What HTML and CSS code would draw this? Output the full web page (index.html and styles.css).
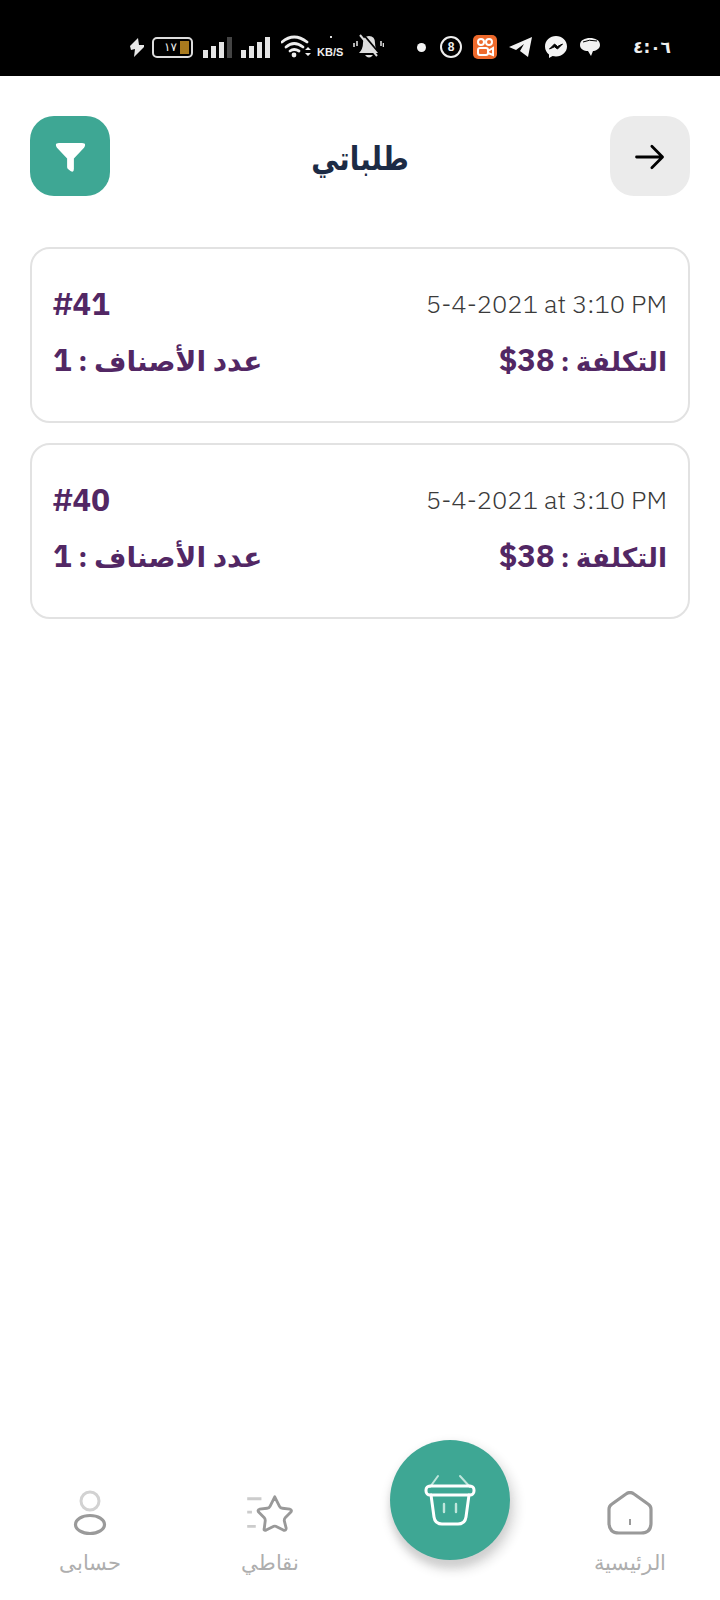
FILE: index.html
```html
<!DOCTYPE html>
<html lang="ar">
<head>
<meta charset="utf-8">
<title>طلباتي</title>
<link rel="stylesheet" href="styles.css">
</head>
<body>
<div class="page">
  <div class="status">
    <svg class="st-bolt" width="15" height="19" viewBox="0 0 15 19"><path d="M8 0 L0 8 L1 12 L5 11 L4 19 L14 9 L14 7 L9 7 Z" fill="#e8e8e8"/></svg>
    <div class="battery"><span class="bat-num">١٧</span><span class="bat-level"></span></div>
    <svg class="st-signal" width="30" height="22" viewBox="0 0 30 22"><rect x="0" y="14" width="5" height="8" fill="#e5e5e5"/><rect x="8" y="10" width="5" height="12" fill="#e5e5e5"/><rect x="16" y="6" width="5" height="16" fill="#e5e5e5"/><rect x="24" y="1" width="5" height="21" fill="#444"/></svg>
    <svg class="st-signal2" width="30" height="22" viewBox="0 0 30 22"><rect x="0" y="14" width="5" height="8" fill="#e5e5e5"/><rect x="8" y="10" width="5" height="12" fill="#e5e5e5"/><rect x="16" y="6" width="5" height="16" fill="#e5e5e5"/><rect x="24" y="1" width="5" height="21" fill="#e5e5e5"/></svg>
    <svg class="st-wifi" width="30" height="24" viewBox="0 0 30 24"><g fill="none" stroke="#eee" stroke-width="2.800" stroke-linecap="round"><path d="M1 7 Q13 -3 26 7"/><path d="M5 12 Q13 5 22 12"/><path d="M9 16 Q13 13 18 16"/></g><circle cx="13" cy="20" r="2.400" fill="#eee"/><path d="M24 15 L27 12 L30 15 Z M24 18 L30 18 L27 21 Z" fill="#eee"/></svg>
    <div class="kbs"><span class="kbs-dot"></span>KB/S</div>
    <svg class="st-bell" width="31" height="26" viewBox="0 0 31 26"><path d="M6 19 Q10 15 10 9 Q10 2 16 2 Q22 2 22 9 Q22 15 26 19 Z" fill="#ddd"/><path d="M12 21 Q16 26 20 21 Z" fill="#ddd"/><path d="M10 0 L27 20" stroke="#000" stroke-width="1.800"/><path d="M7 1 L24 22" stroke="#ddd" stroke-width="2"/><path d="M1 9 V13 M4 7 V12 M28 7 V12 M30.500 9 V13" stroke="#ddd" stroke-width="1.600"/></svg>
    <span class="st-dot"></span>
    <div class="ball">8</div>
    <svg class="st-kwai" width="24" height="24" viewBox="0 0 24 24"><rect width="24" height="24" rx="5" fill="#ee6a2c"/><g fill="none" stroke="#fff" stroke-width="2"><circle cx="8" cy="7" r="3"/><circle cx="16" cy="7" r="3"/><rect x="5" y="13" width="10" height="7" rx="2"/><path d="M15 16 L20 13 V20 L15 18"/></g></svg>
    <svg class="st-tg" width="23" height="20" viewBox="0 0 23 20"><path d="M0 10 L23 0 L19 20 L11 14 L15 7 L7 13 Z" fill="#f2f2f2"/></svg>
    <svg class="st-msg" width="22" height="22" viewBox="0 0 22 22"><path d="M11 0 C5 0 0 4.500 0 10.500 C0 14 1.600 16.600 4 18.400 V22 L7.600 20 C8.700 20.300 9.800 20.500 11 20.500 C17 20.500 22 16 22 10.500 C22 4.500 17 0 11 0 Z" fill="#f4f4f4"/><path d="M4.500 13 L9.500 8 L12.500 10.500 L17.500 8 L12.500 13 L9.500 10.800 Z" fill="#000" stroke="#000"/></svg>
    <svg class="st-bubble" width="20" height="20" viewBox="0 0 20 20"><path d="M10 1 C15 1 20 3 20 8 C20 12 15 14 13 14 L11 19 L8 14 C4 14 0 12 0 8 C0 3 5 1 10 1 Z" fill="#f2f2f2"/><path d="M3 5 Q9 2 17 4" fill="none" stroke="#000" stroke-width="1"/></svg>
    <div class="time">٤:٠٦</div>
  </div>

  <header class="header">
    <button class="icon-btn filter-btn" aria-label="filter">
      <svg width="33" height="29" viewBox="0 0 34 30"><path d="M3 5 Q0 0 5 0 H29 Q34 0 31 5 L20.500 16 V27 Q20.500 31 17 29 L15 27.500 Q13.500 26.500 13.500 25 V16 Z" fill="#fff"/></svg>
    </button>
    <h1 class="title">طلباتي</h1>
    <button class="icon-btn back-btn" aria-label="back">
      <svg width="30" height="26" viewBox="0 0 32 28"><path d="M1.500 14 H29 M18 2.500 L29.500 14 L18 25.500" fill="none" stroke="#000" stroke-width="3" stroke-linecap="round" stroke-linejoin="round"/></svg>
    </button>
  </header>

  <main class="orders">
    <article class="card">
      <div class="row">
        <span class="num">#41</span>
        <span class="date">5-4-2021 at 3:10 PM</span>
      </div>
      <div class="row">
        <span class="strong" dir="rtl">عدد الأصناف : <bdi class="lat">1</bdi></span>
        <span class="strong cost" dir="rtl">التكلفة : <bdi class="lat" dir="ltr">$38</bdi></span>
      </div>
    </article>
    <article class="card">
      <div class="row">
        <span class="num">#40</span>
        <span class="date">5-4-2021 at 3:10 PM</span>
      </div>
      <div class="row">
        <span class="strong" dir="rtl">عدد الأصناف : <bdi class="lat">1</bdi></span>
        <span class="strong cost" dir="rtl">التكلفة : <bdi class="lat" dir="ltr">$38</bdi></span>
      </div>
    </article>
  </main>

  <nav class="nav">
    <div class="nav-item">
      <div class="nav-icon">
        <svg width="34" height="46" viewBox="0 0 34 46"><circle cx="17" cy="11" r="9" fill="none" stroke="#d2d2d2" stroke-width="3"/><ellipse cx="17" cy="34.500" rx="14.500" ry="9" fill="none" stroke="#9a9a9a" stroke-width="3.200"/></svg>
      </div>
      <span class="nav-label" dir="rtl">حسابى</span>
    </div>
    <div class="nav-item">
      <div class="nav-icon">
        <svg width="46" height="38" viewBox="0 0 48 40"><path d="M29 3 L34 13 Q35 15 37 15 L45 16 Q47.500 17 46 19 L40 25 Q39 26 39 28 L41 36 Q41 39 38 38 L30 34 Q29 33.500 28 34 L20 38 Q17 39 18 36 L19 28 Q19 26 18 25 L12 19 Q10.500 17 13 16 L21 15 Q23 15 24 13 Z" fill="none" stroke="#999" stroke-width="3" stroke-linejoin="round"/><path d="M0 5 H15 M0 19 H5 M0 34 H9" stroke="#ccc" stroke-width="3"/></svg>
      </div>
      <span class="nav-label" dir="rtl">نقاطي</span>
    </div>
    <div class="nav-item item-fab">
      <div class="fab">
        <svg width="52" height="52" viewBox="0 0 52 52"><g fill="none" stroke="#fff" stroke-linecap="round" stroke-linejoin="round"><path d="M6 13 L14 2 M46 13 L36 2" stroke="#bfe6dc" stroke-width="2"/><rect x="2" y="12" width="48" height="9" rx="4" stroke-width="3"/><path d="M7 21 L10 43 Q11 50 18 50 H34 Q41 50 42 43 L45 21" stroke-width="3"/><path d="M20 30 V38 M32 30 V38" stroke="#bfe6dc" stroke-width="2.400"/></g></svg>
      </div>
    </div>
    <div class="nav-item">
      <div class="nav-icon">
        <svg width="46" height="44" viewBox="0 0 46 44"><path d="M2 18 Q2 15 5 13 L19 3 Q23 0 27 3 L41 13 Q44 15 44 18 V32 Q44 42 34 42 H12 Q2 42 2 32 Z" fill="none" stroke="#999" stroke-width="3.200" stroke-linejoin="round"/><path d="M23 28 V34" stroke="#999" stroke-width="2"/></svg>
      </div>
      <span class="nav-label" dir="rtl">الرئيسية</span>
    </div>
  </nav>
</div>
</body>
</html>
```

FILE: styles.css
```css
* { box-sizing: border-box; }
html, body { margin: 0; padding: 0; background: #fff; }
body { font-family: "IBM Plex Sans", "Noto Sans", "DejaVu Sans", sans-serif; }
.page { width: 720px; height: 1600px; display: flex; flex-direction: column; overflow: hidden; }

.status { height: 76px; flex: none; background: #000; display: flex; align-items: center; padding: 18px 0 0 130px; color: #eee; }
.status > * { flex: none; }
.battery { margin-left: 7px; width: 41px; height: 21px; border: 2px solid #ddd; border-radius: 5px; display: flex; align-items: center; justify-content: space-between; padding: 0 2px 0 10px; }
.bat-num { font: 12px "DejaVu Sans", sans-serif; color: #eee; line-height: 1; }
.bat-level { width: 9px; height: 13px; background: #a87a1e; }
.st-signal { margin-left: 10px; }
.st-signal2 { margin-left: 8px; }
.st-wifi { margin-left: 10px; }
.kbs { position: relative; width: 30px; margin-left: 6px; padding-top: 10px; font: bold 11px/12px "Liberation Sans", sans-serif; color: #eee; }
.kbs-dot { position: absolute; left: 13px; top: 0; width: 2px; height: 2px; background: #ddd; }
.st-bell { margin-left: 6px; }
.st-dot { width: 9px; height: 9px; border-radius: 50%; background: #f4f4f4; margin-left: 33px; }
.ball { margin-left: 14px; width: 22px; height: 22px; border: 2px solid #eee; border-radius: 50%; font: bold 12px/18px "Liberation Sans", sans-serif; text-align: center; color: #eee; }
.st-kwai { margin-left: 11px; }
.st-tg { margin-left: 12px; }
.st-msg { margin-left: 13px; }
.st-bubble { margin-left: 13px; }
.time { margin-left: 33px; font: bold 17px "DejaVu Sans", sans-serif; color: #eee; }

.header { flex: none; height: 120px; padding: 40px 30px 0; display: flex; justify-content: space-between; align-items: flex-start; }
.icon-btn { width: 80px; height: 80px; border: 0; border-radius: 24px; padding: 2px 0 0; display: flex; align-items: center; justify-content: center; }
.filter-btn { background: #3ea794; }
.back-btn { background: #ebebeb; }
.title { margin: 0; height: 80px; padding-top: 2px; font-size: 33px; font-weight: 700; line-height: 80px; color: #1c2b45; transform: scaleX(0.84); }

.orders { flex: 1; padding: 51px 30px 0; display: flex; flex-direction: column; gap: 20px; }
.card { height: 176px; border: 2px solid #e2e2e2; border-radius: 20px; padding: 37px 21px 0; display: flex; flex-direction: column; gap: 20px; }
.row { display: flex; justify-content: space-between; align-items: center; height: 36px; }
.num, .strong { font-size: 28px; font-weight: 700; color: #522764; line-height: 36px; }
.strong.cost { font-size: 26.500px; }
.num, .lat { font-size: 31px; }
.date { font-size: 25.500px; font-weight: 300; color: #3a3a3a; line-height: 36px; }

.nav { flex: none; height: 160px; position: relative; display: grid; grid-template-columns: 180px 180px 180px 180px; }
.nav-item { display: flex; flex-direction: column; align-items: center; padding-top: 50px; }
.nav-icon { height: 46px; display: flex; align-items: center; justify-content: center; }
.nav-label { margin-top: 10px; font-size: 21px; font-weight: 300; color: #aeaeae; line-height: 32px; }
.item-fab { padding-top: 0; }
.fab { width: 120px; height: 120px; border-radius: 50%; background: #3ea794; display: flex; align-items: center; justify-content: center; box-shadow: 1px 7px 6px 0 #d0d0d0, 3px 7px 8px 6px #ececec; }
```
